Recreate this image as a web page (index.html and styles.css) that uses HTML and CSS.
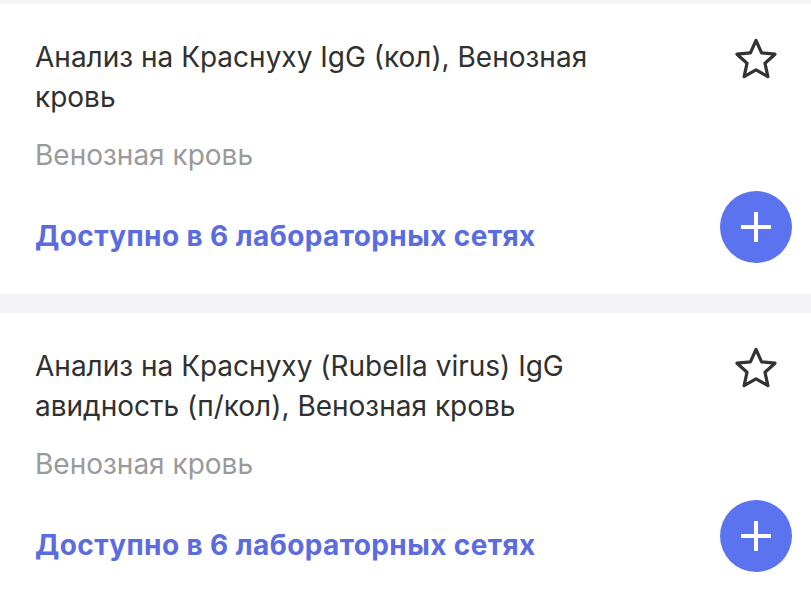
FILE: index.html
```html
<!DOCTYPE html>
<html lang="ru">
<head>
<meta charset="utf-8">
<link rel="stylesheet" href="styles.css">
</head>
<body>
<div class="list">
  <div class="card">
    <div class="info">
      <div class="title">Анализ на Краснуху IgG (кол), Венозная кровь</div>
      <div class="sub">Венозная кровь</div>
      <div class="link">Доступно в 6 лабораторных сетях</div>
    </div>
    <div class="side">
      <svg class="star" width="46" height="44" viewBox="0 0 46 44"><path d="M23 3.5 L28.6 15.8 L42 17.2 L32 26.3 L34.9 39.6 L23 32.8 L11.1 39.6 L14 26.3 L4 17.2 L17.4 15.8 Z" fill="none" stroke="#333" stroke-width="3.2" stroke-linejoin="round"/></svg>
      <button class="add"><svg width="30" height="30" viewBox="0 0 30 30"><path d="M15 1 V29 M1 15 H29" stroke="#fff" stroke-width="4" stroke-linecap="round"/></svg></button>
    </div>
  </div>
  <div class="card">
    <div class="info">
      <div class="title">Анализ на Краснуху (Rubella virus) IgG авидность (п/кол), Венозная кровь</div>
      <div class="sub">Венозная кровь</div>
      <div class="link">Доступно в 6 лабораторных сетях</div>
    </div>
    <div class="side">
      <svg class="star" width="46" height="44" viewBox="0 0 46 44"><path d="M23 3.5 L28.6 15.8 L42 17.2 L32 26.3 L34.9 39.6 L23 32.8 L11.1 39.6 L14 26.3 L4 17.2 L17.4 15.8 Z" fill="none" stroke="#333" stroke-width="3.2" stroke-linejoin="round"/></svg>
      <button class="add"><svg width="30" height="30" viewBox="0 0 30 30"><path d="M15 1 V29 M1 15 H29" stroke="#fff" stroke-width="4" stroke-linecap="round"/></svg></button>
    </div>
  </div>
</div>
</body>
</html>
```
FILE: styles.css
```css
html, body {
  margin: 0;
  padding: 0;
  background: #f4f4f7;
  font-family: Inter, "Noto Sans", sans-serif;
}
.list {
  padding-top: 4px;
  display: flex;
  flex-direction: column;
  gap: 19px;
}
.card {
  background: #fff;
  display: flex;
  padding: 0 19px 0 35px;
}
.info {
  flex: 1;
  padding: 33px 0 40px;
}
.title {
  font-size: 28px;
  line-height: 40px;
  color: #303030;
  max-width: 600px;
}
.sub {
  margin-top: 20px;
  font-size: 28px;
  line-height: 36px;
  color: #9a9a9a;
}
.link {
  margin-top: 45px;
  font-size: 28px;
  line-height: 36px;
  font-weight: 700;
  letter-spacing: 0.4px;
  color: #5a6cde;
}
.side {
  width: 72px;
  display: flex;
  flex-direction: column;
  align-items: center;
  justify-content: space-between;
  padding: 33px 0 31px;
}
.star {
  display: block;
}
.add {
  width: 72px;
  height: 72px;
  border-radius: 50%;
  border: none;
  background: #5b73ee;
  display: flex;
  align-items: center;
  justify-content: center;
  padding: 0;
}
.add svg {
  display: block;
}
```
